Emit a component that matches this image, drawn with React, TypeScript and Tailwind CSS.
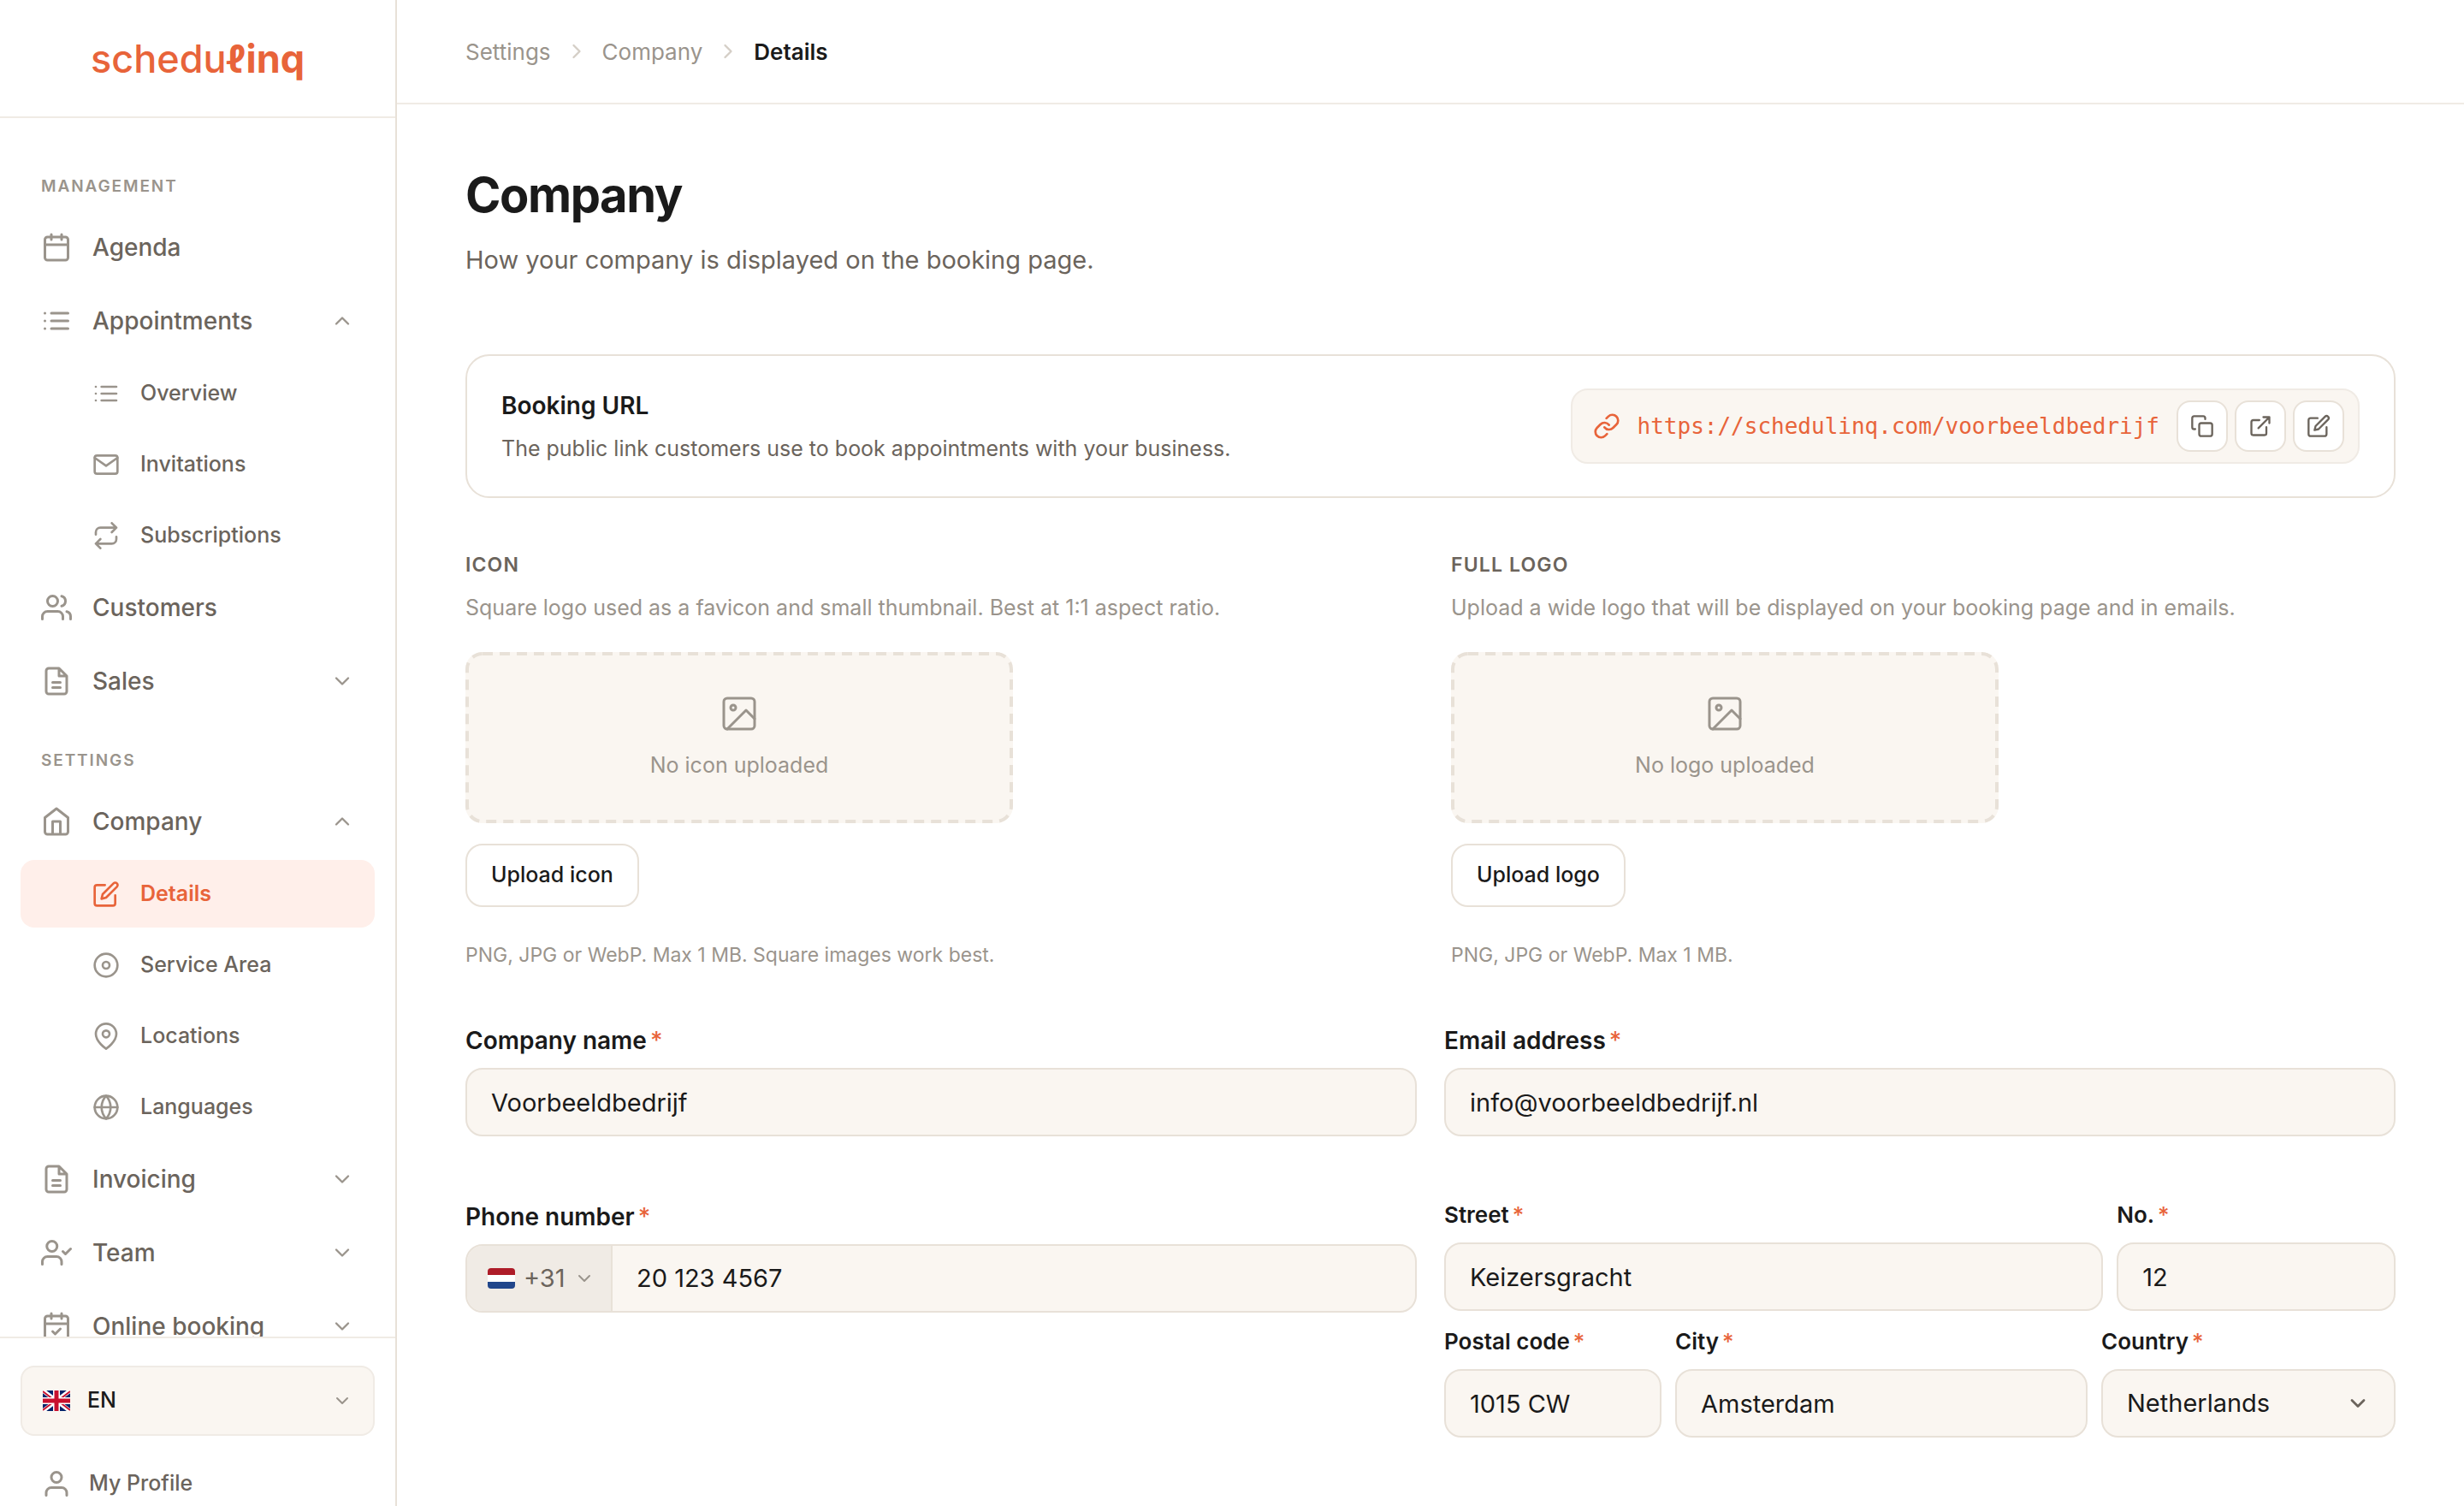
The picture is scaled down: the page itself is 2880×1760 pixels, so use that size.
import React from "react";

type IconProps = { name: string; className?: string; stroke?: number };

const icons: Record<string, React.ReactNode> = {
  calendar: (
    <>
      <rect x="3" y="4" width="18" height="18" rx="2" />
      <path d="M16 2v4M8 2v4M3 10h18" />
    </>
  ),
  calendarCheck: (
    <>
      <rect x="3" y="4" width="18" height="18" rx="2" />
      <path d="M16 2v4M8 2v4M3 10h18M9 16l2 2 4-4" />
    </>
  ),
  list: <path d="M8 6h13M8 12h13M8 18h13M3 6h.01M3 12h.01M3 18h.01" />,
  mail: (
    <>
      <rect x="2" y="4" width="20" height="16" rx="2" />
      <path d="M22 6l-10 7L2 6" />
    </>
  ),
  repeat: (
    <path d="M17 1l4 4-4 4M3 11V9a4 4 0 0 1 4-4h14M7 23l-4-4 4-4M21 13v2a4 4 0 0 1-4 4H3" />
  ),
  users: (
    <>
      <path d="M17 21v-2a4 4 0 0 0-4-4H5a4 4 0 0 0-4 4v2M23 21v-2a4 4 0 0 0-3-3.87M16 3.13a4 4 0 0 1 0 7.75" />
      <circle cx="9" cy="7" r="4" />
    </>
  ),
  file: (
    <path d="M14 2H6a2 2 0 0 0-2 2v16a2 2 0 0 0 2 2h12a2 2 0 0 0 2-2V8zM14 2v6h6M9 13h6M9 17h6" />
  ),
  home: (
    <path d="M3 9l9-7 9 7v11a2 2 0 0 1-2 2H5a2 2 0 0 1-2-2zM9 22V12h6v10" />
  ),
  edit: (
    <path d="M11 4H4a2 2 0 0 0-2 2v14a2 2 0 0 0 2 2h14a2 2 0 0 0 2-2v-7M18.5 2.5a2.121 2.121 0 0 1 3 3L12 15l-4 1 1-4 9.5-9.5z" />
  ),
  target: (
    <>
      <circle cx="12" cy="12" r="10" />
      <circle cx="12" cy="12" r="3" />
    </>
  ),
  pin: (
    <>
      <path d="M21 10c0 7-9 13-9 13s-9-6-9-13a9 9 0 0 1 18 0z" />
      <circle cx="12" cy="10" r="3" />
    </>
  ),
  globe: (
    <>
      <circle cx="12" cy="12" r="10" />
      <path d="M2 12h20M12 2a15.3 15.3 0 0 1 4 10 15.3 15.3 0 0 1-4 10 15.3 15.3 0 0 1-4-10 15.3 15.3 0 0 1 4-10z" />
    </>
  ),
  userCheck: (
    <>
      <path d="M16 21v-2a4 4 0 0 0-4-4H5a4 4 0 0 0-4 4v2M17 11l2 2 4-4" />
      <circle cx="8.5" cy="7" r="4" />
    </>
  ),
  user: (
    <>
      <path d="M20 21v-2a4 4 0 0 0-4-4H8a4 4 0 0 0-4 4v2" />
      <circle cx="12" cy="7" r="4" />
    </>
  ),
  link: (
    <path d="M10 13a5 5 0 0 0 7.54.54l3-3a5 5 0 0 0-7.07-7.07l-1.72 1.71M14 11a5 5 0 0 0-7.54-.54l-3 3a5 5 0 0 0 7.07 7.07l1.71-1.71" />
  ),
  copy: (
    <>
      <rect x="9" y="9" width="13" height="13" rx="2" />
      <path d="M5 15H4a2 2 0 0 1-2-2V4a2 2 0 0 1 2-2h9a2 2 0 0 1 2 2v1" />
    </>
  ),
  external: (
    <path d="M18 13v6a2 2 0 0 1-2 2H5a2 2 0 0 1-2-2V8a2 2 0 0 1 2-2h6M15 3h6v6M10 14L21 3" />
  ),
  image: (
    <>
      <rect x="3" y="3" width="18" height="18" rx="2" />
      <circle cx="8.5" cy="8.5" r="1.5" />
      <path d="M21 15l-5-5L5 21" />
    </>
  ),
  up: <path d="M18 15l-6-6-6 6" />,
  down: <path d="M6 9l6 6 6-6" />,
  right: <path d="M9 18l6-6-6-6" />,
};

const Icon: React.FC<IconProps> = ({ name, className, stroke = 2 }) => (
  <svg
    viewBox="0 0 24 24"
    fill="none"
    stroke="currentColor"
    strokeWidth={stroke}
    strokeLinecap="round"
    strokeLinejoin="round"
    aria-hidden="true"
    className={`shrink-0 ${className ?? ""}`}
  >
    {icons[name]}
  </svg>
);

const FlagUK = () => (
  <svg viewBox="0 0 32 24" className="h-6 w-8 shrink-0" aria-hidden="true">
    <path fill="#012169" d="M0 0h32v24H0z" />
    <path stroke="#fff" strokeWidth="5" d="M0 0l32 24M32 0L0 24" />
    <path
      stroke="#c8102e"
      strokeWidth="2"
      d="M0 1l13 10M32 1L19 11M0 23l13-10M32 23L19 13"
    />
    <path stroke="#fff" strokeWidth="8" d="M16 0v24M0 12h32" />
    <path stroke="#c8102e" strokeWidth="5" d="M16 0v24M0 12h32" />
  </svg>
);

const FlagNL = () => (
  <svg
    viewBox="0 0 32 24"
    className="h-6 w-8 shrink-0 rounded-sm"
    aria-hidden="true"
  >
    <path fill="#ae1c28" d="M0 0h32v8H0z" />
    <path fill="#fff" d="M0 8h32v8H0z" />
    <path fill="#21468b" d="M0 16h32v8H0z" />
  </svg>
);

const NavItem: React.FC<{ icon: string; label: string; open?: boolean }> = ({
  icon,
  label,
  open,
}) => (
  <a
    href="#"
    className="flex h-[82px] shrink-0 items-center gap-6 px-6 text-[28px] font-medium"
  >
    <Icon name={icon} className="size-9 text-[#9a948c]" />
    <span className="flex-1">{label}</span>
    {open !== undefined && (
      <Icon name={open ? "up" : "down"} className="size-7 text-[#9a948c]" />
    )}
  </a>
);

const SubItem: React.FC<{ icon: string; label: string; active?: boolean }> = ({
  icon,
  label,
  active,
}) => (
  <a
    href="#"
    className={`flex h-[79px] shrink-0 items-center gap-6 rounded-2xl pl-[84px] text-[25px] ${
      active
        ? "bg-[#ffefea] font-semibold text-[#e8643a]"
        : "font-medium text-[#6b645c]"
    }`}
  >
    <Icon
      name={icon}
      className={active ? "size-8" : "size-8 text-[#9a948c]"}
    />
    {label}
  </a>
);

const NavHeading: React.FC<{ children: React.ReactNode }> = ({ children }) => (
  <h2 className="mb-2.5 shrink-0 px-6 text-[19px] leading-8 font-semibold tracking-widest text-[#9a948c]">
    {children}
  </h2>
);

const Sidebar = () => (
  <aside className="flex w-[464px] shrink-0 flex-col border-r-2 border-[#e8e1d8]">
    <div className="flex h-[138px] shrink-0 items-center justify-center border-b-2 border-[#f0ebe5]">
      <a
        href="#"
        aria-label="schedulinq"
        className="text-[45px] leading-none font-medium text-[#e8643a]"
      >
        schedu<span className="font-bold">ℓinq</span>
      </a>
    </div>
    <nav className="flex min-h-0 flex-1 flex-col gap-1 overflow-hidden px-6 pt-16 text-[#6b645c]">
      <NavHeading>MANAGEMENT</NavHeading>
      <NavItem icon="calendar" label="Agenda" />
      <NavItem icon="list" label="Appointments" open />
      <SubItem icon="list" label="Overview" />
      <SubItem icon="mail" label="Invitations" />
      <SubItem icon="repeat" label="Subscriptions" />
      <NavItem icon="users" label="Customers" />
      <NavItem icon="file" label="Sales" open={false} />
      <div className="h-7 shrink-0" />
      <NavHeading>SETTINGS</NavHeading>
      <NavItem icon="home" label="Company" open />
      <SubItem icon="edit" label="Details" active />
      <SubItem icon="target" label="Service Area" />
      <SubItem icon="pin" label="Locations" />
      <SubItem icon="globe" label="Languages" />
      <NavItem icon="file" label="Invoicing" open={false} />
      <NavItem icon="userCheck" label="Team" open={false} />
      <NavItem icon="calendarCheck" label="Online booking" open={false} />
    </nav>
    <div className="h-[198px] shrink-0 overflow-hidden border-t-2 border-[#f0ebe5] px-6 pt-8">
      <button className="flex h-[82px] w-full items-center gap-5 rounded-2xl border-2 border-[#f0ebe5] bg-[#faf6f1] px-6 text-[25px] font-medium text-[#1a1a1a]">
        <FlagUK />
        <span className="flex-1 text-left">EN</span>
        <Icon name="down" className="size-6 text-[#9a948c]" />
      </button>
      <a
        href="#"
        className="mt-4 flex h-[79px] items-center gap-5 px-6 text-[25px] font-medium text-[#6b645c]"
      >
        <Icon name="user" className="size-9 text-[#9a948c]" />
        My Profile
      </a>
    </div>
  </aside>
);

// outline with longer dashes than border-dashed gives
const DashedOutline = () => (
  <svg
    className="pointer-events-none absolute inset-0 size-full text-[#e8e1d8]"
    aria-hidden="true"
  >
    <rect
      x="2"
      y="2"
      rx="18"
      fill="none"
      stroke="currentColor"
      strokeWidth="4"
      strokeDasharray="12 8"
      className="h-[calc(100%-4px)] w-[calc(100%-4px)]"
    />
  </svg>
);

const UploadBlock: React.FC<{
  title: string;
  description: string;
  empty: string;
  action: string;
  hint: string;
}> = ({ title, description, empty, action, hint }) => (
  <section>
    <h3 className="text-[23px] leading-9 font-semibold tracking-wider text-[#6b645c]">
      {title}
    </h3>
    <p className="mt-3 text-[25px] leading-10 text-[#9a948c]">{description}</p>
    <div className="relative mt-8 flex h-[200px] max-w-[640px] flex-col items-center justify-center gap-4 rounded-[20px] bg-[#faf6f1] text-[25px] leading-10 text-[#9a948c]">
      <DashedOutline />
      <Icon name="image" className="size-12" stroke={1.5} />
      {empty}
    </div>
    <button className="mt-6 h-[74px] rounded-[20px] border-2 border-[#e8e1d8] bg-white px-7 text-[25px] font-medium text-[#1a1a1a]">
      {action}
    </button>
    <p className="mt-[38px] text-[23px] leading-9 text-[#9a948c]">{hint}</p>
  </section>
);

const Star = () => <span className="ml-1 font-medium text-[#e8643a]">*</span>;

const fieldClass =
  "h-20 w-full min-w-0 rounded-[20px] border-2 border-[#e8e1d8] bg-[#faf6f1] px-7 text-[29px] text-[#1a1a1a] outline-none";

const Field: React.FC<{
  id: string;
  label: string;
  value: string;
  type?: string;
  small?: boolean;
}> = ({ id, label, value, type = "text", small }) => (
  <div className="min-w-0">
    <label
      htmlFor={id}
      className={
        small
          ? "mb-3.5 block text-[26px] leading-9 font-semibold"
          : "mb-3 block text-[28px] leading-10 font-semibold"
      }
    >
      {label}
      <Star />
    </label>
    <input id={id} type={type} defaultValue={value} className={fieldClass} />
  </div>
);

const ActionButton: React.FC<{ icon: string; label: string }> = ({
  icon,
  label,
}) => (
  <button
    aria-label={label}
    className="flex size-[60px] items-center justify-center rounded-2xl border-2 border-[#e8e1d8] bg-white text-[#6b645c]"
  >
    <Icon name={icon} className="size-7" />
  </button>
);

const App: React.FC = () => {
  return (
    <div className="flex h-screen overflow-hidden bg-white font-['Inter',sans-serif] text-[#1a1a1a]">
      <Sidebar />
      <div className="flex min-w-0 flex-1 flex-col">
        <header className="flex h-[122px] shrink-0 items-center gap-4 border-b-2 border-[#f0ebe5] px-20 text-[26px] text-[#9a948c]">
          <a href="#">Settings</a>
          <Icon name="right" className="size-7 text-[#d4cec6]" />
          <a href="#">Company</a>
          <Icon name="right" className="size-7 text-[#d4cec6]" />
          <span className="font-semibold text-[#1a1a1a]">Details</span>
        </header>

        <main className="px-20 pt-[72px]">
          <h1 className="text-[56px] leading-[68px] font-bold tracking-tight">
            Company
          </h1>
          <p className="mt-5 text-[29px] leading-[44px] text-[#6b645c]">
            How your company is displayed on the booking page.
          </p>

          <section className="mt-[88px] flex items-center justify-between rounded-[28px] border-2 border-[#e8e1d8] px-10 py-[38px]">
            <div>
              <h2 className="text-[28px] leading-10 font-semibold">
                Booking URL
              </h2>
              <p className="mt-3 text-[25px] leading-9 text-[#6b645c]">
                The public link customers use to book appointments with your
                business.
              </p>
            </div>
            <div className="flex h-[88px] items-center rounded-[20px] border-2 border-[#f0ebe5] bg-[#faf6f1] pr-4 pl-6">
              <Icon name="link" className="size-8 text-[#e8643a]" />
              <a
                href="#"
                className="mx-5 font-['DejaVu_Sans_Mono',monospace] text-[26px] text-[#e8643a]"
              >
                https://schedulinq.com/voorbeeldbedrijf
              </a>
              <div className="flex gap-2">
                <ActionButton icon="copy" label="Copy link" />
                <ActionButton icon="external" label="Open link" />
                <ActionButton icon="edit" label="Edit link" />
              </div>
            </div>
          </section>

          <div className="mt-[60px] grid grid-cols-2 gap-12">
            <UploadBlock
              title="ICON"
              description="Square logo used as a favicon and small thumbnail. Best at 1:1 aspect ratio."
              empty="No icon uploaded"
              action="Upload icon"
              hint="PNG, JPG or WebP. Max 1 MB. Square images work best."
            />
            <UploadBlock
              title="FULL LOGO"
              description="Upload a wide logo that will be displayed on your booking page and in emails."
              empty="No logo uploaded"
              action="Upload logo"
              hint="PNG, JPG or WebP. Max 1 MB."
            />
          </div>

          <form className="mt-[62px] grid grid-cols-2 gap-x-8 gap-y-[74px]">
            <Field id="name" label="Company name" value="Voorbeeldbedrijf" />
            <Field
              id="email"
              label="Email address"
              type="email"
              value="info@voorbeeldbedrijf.nl"
            />

            <div>
              <label
                htmlFor="phone"
                className="mb-3 block text-[28px] leading-10 font-semibold"
              >
                Phone number
                <Star />
              </label>
              <div className="flex h-20 overflow-hidden rounded-[20px] border-2 border-[#e8e1d8] bg-[#faf6f1] text-[29px]">
                <button
                  type="button"
                  className="flex w-[170px] shrink-0 items-center gap-2.5 border-r-2 border-[#e8e1d8] bg-[#f0ebe5] pl-6 text-[#6b645c]"
                >
                  <FlagNL />
                  +31
                  <Icon name="down" className="size-6 text-[#9a948c]" />
                </button>
                <input
                  id="phone"
                  type="tel"
                  defaultValue="20 123 4567"
                  className="min-w-0 flex-1 bg-transparent px-7 outline-none"
                />
              </div>
            </div>

            <div className="flex flex-col gap-[18px]">
              <div className="grid grid-cols-[26fr_11fr] gap-4">
                <Field id="street" label="Street" value="Keizersgracht" small />
                <Field id="number" label="No." value="12" small />
              </div>
              <div className="grid grid-cols-[127fr_241fr_172fr] gap-4">
                <Field id="postal" label="Postal code" value="1015 CW" small />
                <Field id="city" label="City" value="Amsterdam" small />
                <div className="min-w-0">
                  <label
                    htmlFor="country"
                    className="mb-3.5 block text-[26px] leading-9 font-semibold"
                  >
                    Country
                    <Star />
                  </label>
                  <div className="relative">
                    <select
                      id="country"
                      className={`${fieldClass} appearance-none`}
                    >
                      <option>Netherlands</option>
                    </select>
                    <Icon
                      name="down"
                      stroke={2.4}
                      className="pointer-events-none absolute top-[26px] right-[30px] size-7 text-[#6b645c]"
                    />
                  </div>
                </div>
              </div>
            </div>
          </form>
        </main>
      </div>
    </div>
  );
};

export default App;
